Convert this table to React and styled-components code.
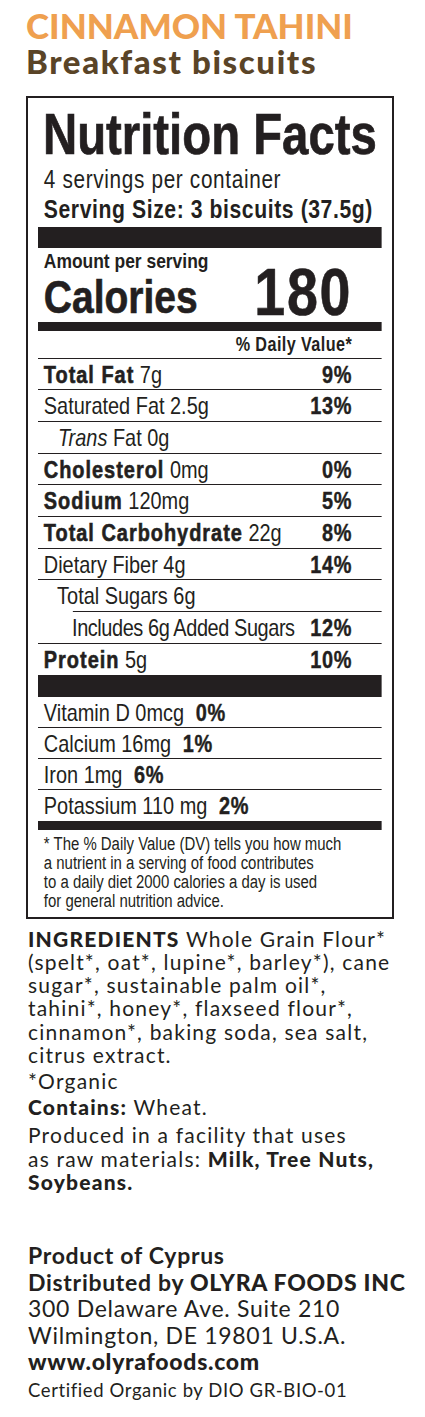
import styled, { createGlobalStyle } from "styled-components";

const GlobalStyle = createGlobalStyle`
  body {
    margin: 0;
    background: #ffffff;
  }
`;

const INK = "#231f20";
const LABEL_FONT = `"Liberation Sans", Arial, sans-serif`;
const ROUND = `Lato, "Noto Sans", sans-serif`;
// the label face is a condensed grotesque: squeeze Liberation Sans to match
const SQUEEZE = 0.83;

const nutrients = [
  { name: "Total Fat", amount: "7g", dv: "9%", bold: true },
  { name: "Saturated Fat", amount: "2.5g", dv: "13%" },
  { name: "Fat", amount: "0g", italic: "Trans", indent: 17 },
  { name: "Cholesterol", amount: "0mg", dv: "0%", bold: true },
  { name: "Sodium", amount: "120mg", dv: "5%", bold: true },
  { name: "Total Carbohydrate", amount: "22g", dv: "8%", bold: true },
  { name: "Dietary Fiber", amount: "4g", dv: "14%" },
  { name: "Total Sugars", amount: "6g", indent: 16, lineIndent: 42 },
  { name: "Includes 6g Added Sugars", amount: "", dv: "12%", indent: 34, tight: true },
  { name: "Protein", amount: "5g", dv: "10%", bold: true, last: true },
];

const minerals = [
  { name: "Vitamin D 0mcg", dv: "0%" },
  { name: "Calcium 16mg", dv: "1%" },
  { name: "Iron 1mg", dv: "6%" },
  { name: "Potassium 110 mg", dv: "2%", last: true },
];

export default function App() {
  return (
    <Page>
      <GlobalStyle />
      <Title>CINNAMON TAHINI</Title>
      <Subtitle>Breakfast biscuits</Subtitle>

      <Label>
        <Condensed>
          <Heading>Nutrition Facts</Heading>
          <Servings>4 servings per container</Servings>
          <ServingSize>Serving Size: 3 biscuits (37.5g)</ServingSize>
          <Bar $h={21} $top={4} />
          <CaloriesBlock>
            <div>
              <AmountLabel>Amount per serving</AmountLabel>
              <CaloriesWord>Calories</CaloriesWord>
            </div>
            <CaloriesValue>180</CaloriesValue>
          </CaloriesBlock>
          <Bar $h={9} />
          <DvHeader>% Daily Value*</DvHeader>
          {nutrients.map((n) => (
            <Row key={n.name} $last={n.last} $lineIndent={n.lineIndent}>
              <RowName $indent={n.indent} $tight={n.tight}>
                {n.italic && <em>{n.italic} </em>}
                {n.bold ? <Strong>{n.name}</Strong> : n.name}
                {n.amount && ` ${n.amount}`}
              </RowName>
              {n.dv && <Percent>{n.dv}</Percent>}
            </Row>
          ))}
          <Bar $h={22} />
          {minerals.map((m) => (
            <MineralRow key={m.name} $last={m.last}>
              {m.name}
              <Percent>{m.dv}</Percent>
            </MineralRow>
          ))}
          <Bar $h={9} />
          <Footnote>
            * The % Daily Value (DV) tells you how much<br />
            a nutrient in a serving of food contributes<br />
            to a daily diet 2000 calories a day is used<br />
            for general nutrition advice.
          </Footnote>
        </Condensed>
      </Label>

      <Ingredients>
        <Line>
          <b>INGREDIENTS</b> Whole Grain Flour*
        </Line>
        <Line>(spelt*, oat*, lupine*, barley*), cane</Line>
        <Line>sugar*, sustainable palm oil*,</Line>
        <Line>tahini*, honey*, flaxseed flour*,</Line>
        <Line>cinnamon*, baking soda, sea salt,</Line>
        <Line>citrus extract.</Line>
        <Line $gap={3}>*Organic</Line>
        <Line $gap={3}>
          <b>Contains:</b> Wheat.
        </Line>
        <Line $gap={5}>Produced in a facility that uses</Line>
        <Line>
          as raw materials: <b>Milk, Tree Nuts,</b>
        </Line>
        <Line>
          <b>Soybeans.</b>
        </Line>
      </Ingredients>

      <Origin>
        <OriginLine $weight={700}>Product of Cyprus</OriginLine>
        <OriginLine $weight={700}>
          Distributed by <Heavy>OLYRA FOODS INC</Heavy>
        </OriginLine>
        <OriginLine>300 Delaware Ave. Suite 210</OriginLine>
        <OriginLine>Wilmington, DE 19801 U.S.A.</OriginLine>
        <OriginLine $weight={900}>www.olyrafoods.com</OriginLine>
        <Certified>Certified Organic by DIO GR-BIO-01</Certified>
      </Origin>
    </Page>
  );
}

const Page = styled.div`
  width: 425px;
  height: 1417px;
  box-sizing: border-box;
  padding: 0 0 0 26px;
  color: ${INK};
  overflow: hidden;
`;

const Title = styled.h1`
  margin: 0;
  padding-top: 8px;
  font-family: ${ROUND};
  font-weight: 900;
  font-size: 35px;
  line-height: 35px;
  color: #efa04f;
`;

const Subtitle = styled.h2`
  margin: 0;
  font-family: ${ROUND};
  font-weight: 900;
  font-size: 33px;
  line-height: 36px;
  letter-spacing: 1.6px;
  color: #5a4427;
`;

const Label = styled.section`
  margin-top: 17px;
  width: 368px;
  box-sizing: border-box;
  border: 2px solid ${INK};
  padding: 0 10px 6px;
  font-family: ${LABEL_FONT};
`;

const Condensed = styled.div`
  width: ${344 / SQUEEZE}px;
  transform: scaleX(${SQUEEZE});
  transform-origin: left top;
`;

const Heading = styled.div`
  margin-top: 6px;
  padding-left: 6px;
  font-weight: 700;
  font-size: 57px;
  line-height: 60px;
  -webkit-text-stroke: 0.7px ${INK};
`;

const Servings = styled.div`
  padding-left: 7px;
  font-size: 25px;
  line-height: 31px;
  letter-spacing: 0.8px;
`;

const ServingSize = styled.div`
  padding-left: 7px;
  font-weight: 700;
  font-size: 25.5px;
  line-height: 28px;
  letter-spacing: 0.7px;
`;

const Bar = styled.div`
  height: ${(p) => p.$h}px;
  margin-top: ${(p) => p.$top || 0}px;
  background: ${INK};
`;

const CaloriesBlock = styled.div`
  display: flex;
  align-items: flex-end;
  justify-content: space-between;
  padding: 2px 36px 0 7px;
`;

const AmountLabel = styled.div`
  font-weight: 700;
  font-size: 21px;
  line-height: 22px;
`;

const CaloriesWord = styled.div`
  font-weight: 700;
  font-size: 47px;
  line-height: 49.5px;
  -webkit-text-stroke: 0.6px ${INK};
`;

const CaloriesValue = styled.div`
  font-weight: 700;
  font-size: 67px;
  line-height: 60px;
  letter-spacing: 2px;
  -webkit-text-stroke: 0.6px ${INK};
`;

const DvHeader = styled.div`
  padding-right: 36px;
  text-align: right;
  font-weight: 700;
  font-size: 19.5px;
  line-height: 27px;
  letter-spacing: 0.5px;
  border-bottom: 1px solid ${INK};
`;

const Row = styled.div`
  position: relative;
  display: flex;
  justify-content: space-between;
  height: 31.7px;
  padding: 0 36px 0 7px;
  font-size: 24px;
  line-height: 31.7px;
  ${(p) =>
    !p.$last &&
    `
    &::after {
      content: "";
      position: absolute;
      left: ${p.$lineIndent || 0}px;
      right: 0;
      bottom: 0;
      border-bottom: 1px solid ${INK};
    }
  `}
`;

const RowName = styled.span`
  padding-left: ${(p) => p.$indent || 0}px;
  letter-spacing: ${(p) => (p.$tight ? "-0.5px" : "0")};
  em {
    font-style: italic;
  }
`;

const Strong = styled.b`
  font-weight: 700;
  letter-spacing: 1.2px;
  -webkit-text-stroke: 0.6px ${INK};
`;

const Percent = styled.b`
  font-weight: 700;
  letter-spacing: 0.8px;
  -webkit-text-stroke: 0.4px ${INK};
`;

const MineralRow = styled.div`
  display: flex;
  gap: 14px;
  height: 31px;
  box-sizing: border-box;
  padding-left: 7px;
  font-size: 24px;
  line-height: 31px;
  border-bottom: ${(p) => (p.$last ? "none" : `1px solid ${INK}`)};
`;

const Footnote = styled.p`
  margin: 4.4px 0 0;
  padding-left: 7px;
  font-size: 18px;
  line-height: 19px;
`;

const Ingredients = styled.div`
  margin-top: 8px;
  padding-left: 2px;
  font-family: ${ROUND};
  font-size: 21px;
  line-height: 23.2px;
  letter-spacing: 1.2px;
  b {
    font-weight: 900;
  }
`;

const Line = styled.div`
  margin-top: ${(p) => p.$gap || 0}px;
`;

const Origin = styled.div`
  margin-top: 49px;
  padding-left: 2px;
  font-family: ${ROUND};
  font-size: 23px;
  line-height: 26.5px;
  letter-spacing: 0.7px;
`;

const OriginLine = styled.div`
  font-weight: ${(p) => p.$weight || 400};
`;

const Heavy = styled.span`
  font-weight: 900;
`;

const Certified = styled.div`
  margin-top: 3px;
  font-size: 18.5px;
  line-height: 24px;
  letter-spacing: 0.6px;
`;
